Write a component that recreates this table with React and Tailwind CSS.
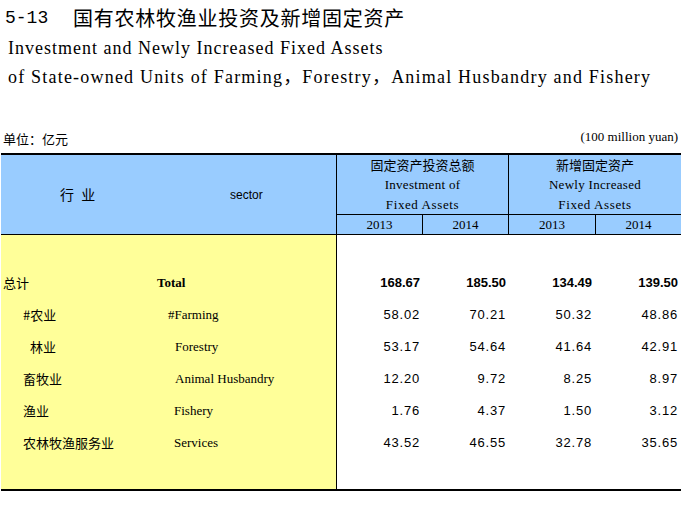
import React from "react";

const rows = [
  { zh: "总计", zhPad: "pl-[2px]", en: "Total", enPad: "pl-[2px] font-bold", num: "font-bold", v: ["168.67", "185.50", "134.49", "139.50"] },
  { zh: "#农业", zhPad: "pl-[22px]", en: "#Farming", enPad: "pl-[13px]", num: "tracking-[0.8px]", v: ["58.02", "70.21", "50.32", "48.86"] },
  { zh: "林业", zhPad: "pl-[29px]", en: "Forestry", enPad: "pl-[20px]", num: "tracking-[0.8px]", v: ["53.17", "54.64", "41.64", "42.91"] },
  { zh: "畜牧业", zhPad: "pl-[22px]", en: "Animal Husbandry", enPad: "pl-[20px]", num: "tracking-[0.8px]", v: ["12.20", "9.72", "8.25", "8.97"] },
  { zh: "渔业", zhPad: "pl-[22px]", en: "Fishery", enPad: "pl-[19px]", num: "tracking-[0.8px]", v: ["1.76", "4.37", "1.50", "3.12"] },
  { zh: "农林牧渔服务业", zhPad: "pl-[22px]", en: "Services", enPad: "pl-[19px]", num: "tracking-[0.8px]", v: ["43.52", "46.55", "32.78", "35.65"] },
];

const SERIF = "font-['Liberation_Serif','Noto_Sans_CJK_SC',serif]";
const SANS = "font-['Liberation_Sans','Noto_Sans_CJK_SC',sans-serif]";
const CJK = "font-['Noto_Sans_CJK_SC',sans-serif]";

function GroupHeader({ zh, en1, en2, firstW }) {
  return (
    <>
      <div className="h-[60px] border-b border-black flex flex-col items-center text-[13px] leading-[20px]">
        <span className={CJK}>{zh}</span>
        <span className={`tracking-[0.3px] ${SERIF}`}>{en1}</span>
        <span className={`tracking-[0.6px] ${SERIF}`}>{en2}</span>
      </div>
      <div className={`flex h-[19px] text-[13px] leading-[19px] ${SERIF}`}>
        <div className={`${firstW} border-r border-black text-center`}>2013</div>
        <div className="flex-1 text-center">2014</div>
      </div>
    </>
  );
}

export default function App() {
  return (
    <div className="w-[681px] h-[523px] bg-white text-black overflow-hidden">
      {/* Titles */}
      <div className="pt-[4px] h-[32px] flex items-center whitespace-nowrap">
        <span className="pl-[5px] w-[73px] text-[18px] leading-[28px] font-['Liberation_Mono',monospace]">5-13</span>
        <span className={`text-[20px] leading-[28px] tracking-[0.75px] ${CJK}`}>国有农林牧渔业投资及新增固定资产</span>
      </div>
      <div className={`mt-[2px] pl-[8px] h-[29px] flex items-center text-[18px] tracking-[1px] whitespace-nowrap ${SERIF}`}>
        Investment and Newly Increased Fixed Assets
      </div>
      <div className={`pl-[8px] h-[29px] flex items-center text-[18px] tracking-[1.2px] whitespace-nowrap ${SERIF}`}>
        of State-owned Units of Farming，Forestry，Animal Husbandry and Fishery
      </div>

      {/* Units */}
      <div className="mt-[37px] h-[20px] flex items-center justify-between px-[3px]">
        <span className={`text-[13px] leading-[20px] ${CJK}`}>单位：亿元</span>
        <span className={`text-[13px] leading-[20px] -mt-[4px] ${SERIF}`}>(100 million yuan)</span>
      </div>

      {/* Table */}
      <div className="mt-[4px] ml-[1px] w-[680px] border-t-2 border-b-2 border-black">
        {/* Header */}
        <div className="flex h-[80px] border-b border-black bg-[#99ccff]">
          <div className="w-[336px] border-r border-black flex items-center">
            <span className={`pl-[59px] w-[154px] text-[14px] tracking-[2px] ${CJK}`}>行 业</span>
            <span className={`pl-[75px] text-[12px] ${SANS}`}>sector</span>
          </div>
          <div className="w-[172px] border-r border-black flex flex-col">
            <GroupHeader zh="固定资产投资总额" en1="Investment of" en2="Fixed Assets" firstW="w-[86px]" />
          </div>
          <div className="flex-1 flex flex-col">
            <GroupHeader zh="新增固定资产" en1="Newly Increased" en2="Fixed Assets" firstW="w-[87px]" />
          </div>
        </div>

        {/* Body */}
        <div className="flex h-[254px]">
          <div className="w-[336px] border-r border-black bg-[#ffff99] pt-[32px]">
            {rows.map((r) => (
              <div key={r.zh} className="flex items-center h-[32px] whitespace-nowrap">
                <span className={`w-[154px] text-[13px] ${CJK} ${r.zhPad}`}>{r.zh}</span>
                <span className={`text-[13px] ${SERIF} ${r.enPad}`}>{r.en}</span>
              </div>
            ))}
          </div>
          <div className="flex-1 pt-[32px]">
            {rows.map((r) => (
              <div key={r.zh} className={`grid grid-cols-[86px_86px_86px_86px] h-[32px] items-center text-[13px] ${SANS}`}>
                {r.v.map((x, i) => (
                  <div key={i} className={`text-right pr-[3px] ${r.num}`}>
                    {x}
                  </div>
                ))}
              </div>
            ))}
          </div>
        </div>
      </div>
    </div>
  );
}
